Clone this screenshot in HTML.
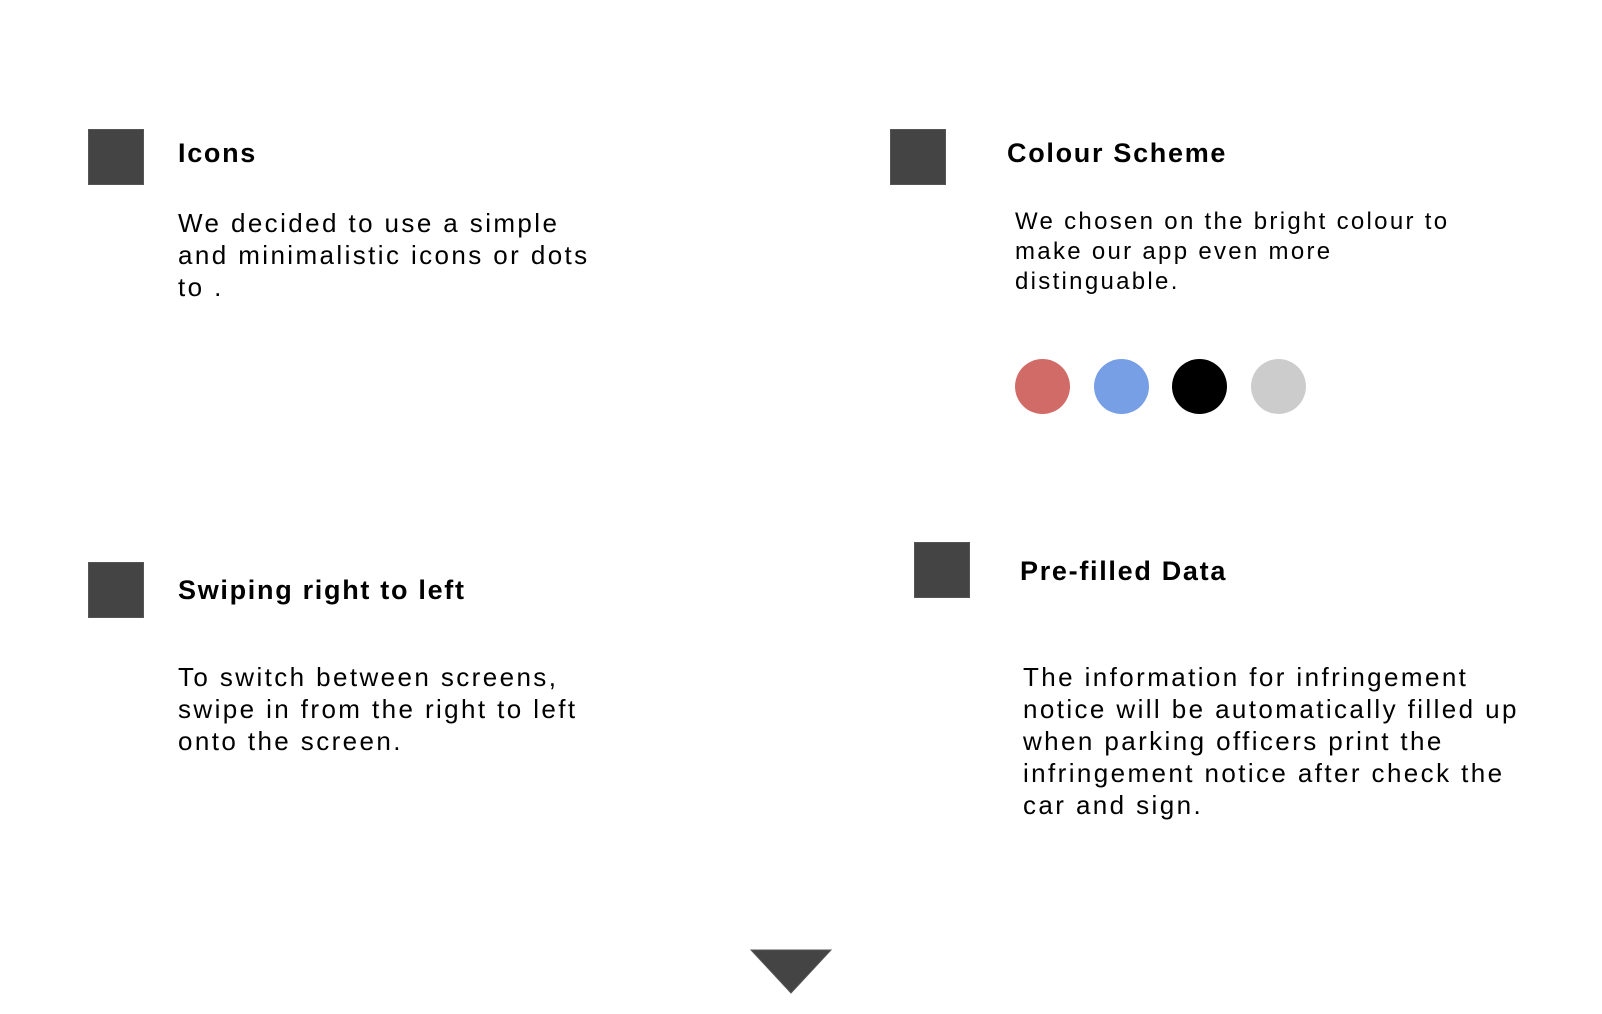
<!DOCTYPE html>
<html><head><meta charset="utf-8"><style>
html,body{margin:0;padding:0;background:#fff;}
body{width:1602px;height:1014px;position:relative;overflow:hidden;font-family:"Liberation Sans",sans-serif;color:#000;}
.sq{position:absolute;width:54px;height:54px;background:#444;border:1px solid #555;}
.h{position:absolute;font-weight:bold;font-size:27px;line-height:32px;white-space:nowrap;letter-spacing:1.7px;}
.t{position:absolute;font-size:26px;line-height:32px;white-space:nowrap;letter-spacing:2.4px;}
.c{position:absolute;width:55px;height:55px;border-radius:50%;top:359px;}
</style></head><body>
<div class="sq" style="left:88px;top:129px"></div>
<div class="h" style="left:178px;top:137px">Icons</div>
<div class="t" style="left:178px;top:207px">We decided to use a simple<br>and minimalistic icons or dots<br>to .</div>

<div class="sq" style="left:890px;top:129px"></div>
<div class="h" style="left:1007px;top:137px">Colour Scheme</div>
<div class="t" style="left:1015px;top:207px;font-size:24px;line-height:30px;letter-spacing:2.3px">We chosen on the bright colour to<br>make our app even more<br>distinguable.</div>
<div class="c" style="left:1015px;background:#d16b67"></div>
<div class="c" style="left:1094px;background:#779fe5"></div>
<div class="c" style="left:1172px;background:#000"></div>
<div class="c" style="left:1251px;background:#cccccc"></div>

<div class="sq" style="left:88px;top:562px"></div>
<div class="h" style="left:178px;top:574px">Swiping right to left</div>
<div class="t" style="left:178px;top:661px">To switch between screens,<br>swipe in from the right to left<br>onto the screen.</div>

<div class="sq" style="left:914px;top:542px"></div>
<div class="h" style="left:1020px;top:555px">Pre-filled Data</div>
<div class="t" style="left:1023px;top:661px">The information for infringement<br>notice will be automatically filled up<br>when parking officers print the<br>infringement notice after check the<br>car and sign.</div>

<svg style="position:absolute;left:750px;top:949px" width="82" height="46"><polygon points="1,1 81,1 41,44" fill="#444" stroke="#555" stroke-width="1"/></svg>
</body></html>
